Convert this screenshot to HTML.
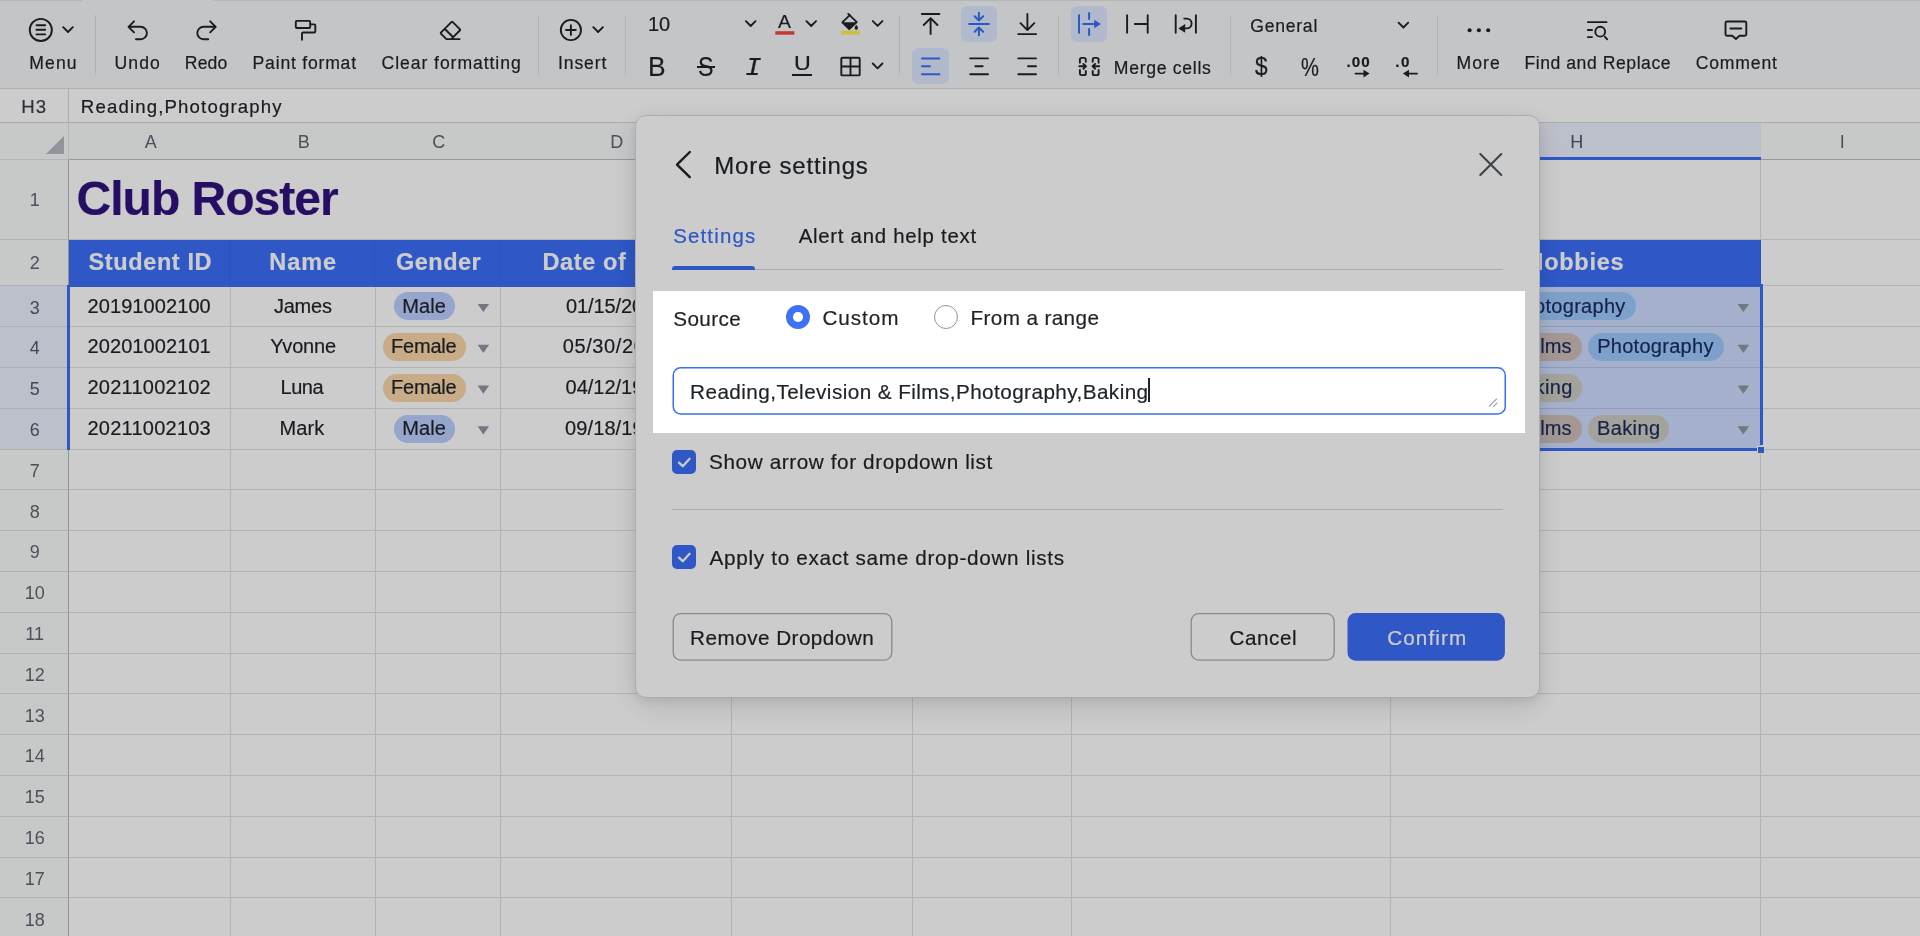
<!DOCTYPE html>
<html lang="en"><head><meta charset="utf-8"><title>Club Roster</title>
<style>
*{box-sizing:border-box}
html,body{margin:0;padding:0}
body{width:1920px;height:936px;overflow:hidden;position:relative;background:#fff;font-family:"Liberation Sans",sans-serif;color:#1f2329}
.a{position:absolute}
.t{position:absolute;white-space:pre;-webkit-text-stroke:.2px currentColor}
.tb{position:absolute;left:0;top:0;width:1920px;height:89px;background:#f6f7f9;border-bottom:1px solid #d9dbdf}
.sep{position:absolute;width:1px;background:#dddfe2;top:15px;height:60px}
.act{position:absolute;background:#dee9ff;border-radius:6px}
.fb{position:absolute;left:0;top:89px;width:1920px;height:34px;background:#fff;border-bottom:1px solid #d4d6da}
.grid{position:absolute;left:0;top:0;width:1920px;height:936px;overflow:hidden}
.ch{position:absolute;top:123px;height:37px;background:#f9fafb;border-right:1px solid #dcdee1;border-bottom:1px solid #bcbfc6}
.rh{position:absolute;left:0;width:69px;background:#f9fafb;border-right:1px solid #b4b7be;border-bottom:1px solid #dcdee1}
.vl{position:absolute;width:1px;background:#dfe0e2}
.hl{position:absolute;height:1px;background:#dfe0e2;left:69px;width:1851px}
.hd{position:absolute;top:240px;height:47px;background:#3b6ef8;border-right:1px solid #3867ea}
.pill{position:absolute;border-radius:15px}
.dd{position:absolute;width:0;height:0;border-left:5.75px solid transparent;border-right:5.75px solid transparent;border-top:8.2px solid #9095a0}
.modal{position:absolute;left:635px;top:115px;width:905px;height:583px;background:#fff;border-radius:11px;border:1px solid #d6d9de;box-shadow:0 8px 28px rgba(31,35,41,.13),0 3px 10px rgba(31,35,41,.08)}
.btn{position:absolute;top:613px;height:48px;border-radius:8px;border:1px solid #b4b8bf}
.cb{position:absolute;left:672px;width:24px;height:24px;border-radius:5px;background:#3b6ef8}
svg{position:absolute;left:0;top:0;overflow:visible}
</style></head><body><div id="app" style="position:absolute;left:0;top:0;width:1920px;height:936px;will-change:transform">

<div class="tb">
<div class="a" style="left:0;top:0;width:82px;height:1px;background:#e3e4e7"></div><div class="a" style="left:213px;top:0;width:1707px;height:1px;background:#e3e4e7"></div>
<div class="sep" style="left:95px"></div>
<div class="sep" style="left:538px"></div>
<div class="sep" style="left:625px"></div>
<div class="sep" style="left:899px"></div>
<div class="sep" style="left:1058px"></div>
<div class="sep" style="left:1230px"></div>
<div class="sep" style="left:1437px"></div>
<div class="act" style="left:961px;top:6px;width:36px;height:36px"></div>
<div class="act" style="left:1071px;top:6px;width:36px;height:36px"></div>
<div class="act" style="left:912px;top:48px;width:37px;height:36px"></div>
<svg width="1920" height="89" viewBox="0 0 1920 89">
<g fill="none" stroke="#1f2329" stroke-width="1.9" stroke-linecap="round" stroke-linejoin="round">
<circle cx="40.8" cy="29.9" r="11.05"/><circle cx="570.9" cy="30" r="10.1"/><circle cx="1600.2" cy="31.7" r="4.9"/>
<path d="M36.5 25.2H45.2M36.5 29.8H45.2M36.5 34.4H45.2M63.2 27.2 L68 32 L72.8 27.2M134 21.3L128.5 26.8L134 32.3M129 26.8H140.7a6.2 6.2 0 0 1 0 12.4H136M210.2 21.3L215.7 26.8L210.2 32.3M215.2 26.8H203.5a6.2 6.2 0 0 0 0 12.4H208.2M296.8 20.9H309.2a1 1 0 0 1 1 1V27a1 1 0 0 1-1 1H296.8a1 1 0 0 1-1-1V21.9a1 1 0 0 1 1-1zM310.4 24.4H314.3a1 1 0 0 1 1 1V31.5a1 1 0 0 1-1 1H303a1 1 0 0 0-1 1V39.8M446.4 39.1L441.1 33.8a1 1 0 0 1 0-1.4L451.4 22.1a1 1 0 0 1 1.4 0L459.8 29.1a1 1 0 0 1 0 1.4L451.2 39.1M444.9 29L452.9 37M446.4 39.1H459.6M566 30H575.8M570.9 25.1V34.9M593.3 27.2 L598.1 32 L602.9 27.2M745.9 21.2 L750.7 26 L755.5 21.2M806.4 21.2 L811.2 26 L816 21.2M872.8 21.1 L877.6 25.9 L882.4 21.1M872.8 63.5 L877.6 68.3 L882.4 63.5M1398.6 22.7 L1403.4 27.5 L1408.2 22.7M921.8 14H939.4M930.6 34V18.3M923.8 25L930.6 18.2L937.4 25M1018.2 34.1H1036.2M1027.4 14V30M1020.5 23.2L1027.4 30.1L1034.3 23.2M1127.1 15.2V32.8M1147.7 15.2V32.8M1134.8 24H1147.7M1175.7 15.2V32.8M1195.9 15.2V32.8M1184.2 18.6H1186.7a4.9 4.9 0 0 1 0 9.8H1185M842.3 57.7H858.7a1 1 0 0 1 1 1V74.4a1 1 0 0 1-1 1H842.3a1 1 0 0 1-1-1V58.7a1 1 0 0 1 1-1zM850.5 57.7V75.4M841.3 66.5H859.7M970.2 58.4H988M975.3 66.3H982.7M970.2 74.3H988M1018.3 58.4H1036M1028 66.3H1036M1018.3 74.3H1036M1079.9 62.8V59.6a1.7 1.7 0 0 1 1.7-1.7h2.5a1.7 1.7 0 0 1 1.7 1.7V61.8M1079.9 69.9V73.4a1.7 1.7 0 0 0 1.7 1.7h2.5a1.7 1.7 0 0 0 1.7-1.7V70.9M1092.7 61.8V59.6a1.7 1.7 0 0 1 1.7-1.7h2.5a1.7 1.7 0 0 1 1.7 1.7V62.8M1092.7 70.9V73.4a1.7 1.7 0 0 0 1.7 1.7h2.5a1.7 1.7 0 0 0 1.7-1.7V69.9M1079.3 66.3H1085.8M1083.4 63.9L1085.9 66.3L1083.4 68.7M1099.2 66.3H1092.7M1095.1 63.9L1092.6 66.3L1095.1 68.7M1355.5 73.6H1364M1417 73.6H1408.5M1587.8 22.1H1606.6M1587.8 30H1592M1587.8 37.1H1592M1605 36.8L1607.2 39.3M1727 21.5H1744.8a1.5 1.5 0 0 1 1.5 1.5V34.2a1.5 1.5 0 0 1-1.5 1.5H1739.5L1735.9 39L1732.3 35.7H1727a1.5 1.5 0 0 1-1.5-1.5V23a1.5 1.5 0 0 1 1.5-1.5zM1730.4 28.5H1741.4"/></g>
<g fill="none" stroke="#3b6ef8" stroke-width="2" stroke-linecap="round" stroke-linejoin="round"><path d="M969.2 24H988.8M978.9 12.8V20M974.7 16.3L978.9 20.5L983.1 16.3M978.9 35.2V28M974.7 31.7L978.9 27.5L983.1 31.7M1079 15.2V32.8M1089.1 13V19M1089.1 29V35M1083.3 24H1094M922 58.4H939.4M922 66.3H930M922 74.3H939.4"/></g>
<g fill="#1f2329" stroke="none">
<path d="M1094.2 19.8L1100.9 24L1094.2 28.2Z" fill="#3b6ef8"/>
<path d="M1178.3 28.4L1185.2 24V32.8Z"/>
<path d="M1363.5 69.8L1369.6 73.6L1363.5 77.4Z"/><path d="M1409 69.8L1402.9 73.6L1409 77.4Z"/>
<circle cx="1469.6" cy="30.2" r="2.05"/><circle cx="1478.9" cy="30.2" r="2.05"/><circle cx="1488.2" cy="30.2" r="2.05"/>
<path d="M842.6 22.3H856.3L849.2 29.2Z"/>
<path d="M856.3 24.7q2.3 2.6 1.6 4.1a1.8 1.8 0 0 1-3.2 0q-.700-1.5 1.6-4.1z"/>
</g>
<path d="M848.2 13.8L856.8 22.2L849.2 29.2L842.3 22.3L850 14.9" fill="none" stroke="#1f2329" stroke-width="1.8" stroke-linejoin="round" stroke-linecap="round"/>
<rect x="775.3" y="31.2" width="19" height="3.5" fill="#f0483f"/><rect x="841.3" y="30.6" width="18.4" height="3.9" fill="#fcf04e"/>
</svg>
<div class="t" style="left:29.3px;top:52.3px;font-size:17.6px;line-height:22px;letter-spacing:1.092px">Menu</div>
<div class="t" style="left:114.5px;top:52.3px;font-size:17.6px;line-height:22px;letter-spacing:1.075px">Undo</div>
<div class="t" style="left:184.8px;top:52.3px;font-size:17.6px;line-height:22px;letter-spacing:0.142px">Redo</div>
<div class="t" style="left:252.6px;top:52.3px;font-size:17.6px;line-height:22px;letter-spacing:0.785px">Paint format</div>
<div class="t" style="left:381.6px;top:52.3px;font-size:17.6px;line-height:22px;letter-spacing:0.928px">Clear formatting</div>
<div class="t" style="left:557.9px;top:52.3px;font-size:17.6px;line-height:22px;letter-spacing:0.917px">Insert</div>
<div class="t" style="left:1456.4px;top:52.3px;font-size:17.6px;line-height:22px;letter-spacing:1.134px">More</div>
<div class="t" style="left:1524.4px;top:52.3px;font-size:17.6px;line-height:22px;letter-spacing:0.552px">Find and Replace</div>
<div class="t" style="left:1695.7px;top:52.3px;font-size:17.6px;line-height:22px;letter-spacing:0.838px">Comment</div>
<div class="t" style="left:648px;top:12.2px;font-size:20px;line-height:24px;letter-spacing:-0.123px">10</div>
<div class="t" style="left:778.4px;top:10.1px;font-size:19px;line-height:23px;transform:scaleX(1.023);transform-origin:0 0">A</div>
<div class="t" style="left:1250.2px;top:14.5px;font-size:17.6px;line-height:22px;letter-spacing:0.753px">General</div>
<div class="t" style="left:1113.8px;top:57px;font-size:17.6px;line-height:22px;letter-spacing:0.704px">Merge cells</div>
<div class="t" style="left:648.07px;top:49.7px;font-size:27.3px;line-height:33px;transform:scaleX(0.967);transform-origin:0 0">B</div>
<div class="t" style="left:698.15px;top:49.5px;font-size:27.3px;line-height:33px;transform:scaleX(0.85);transform-origin:0 0">S</div>
<div class="a" style="left:697px;top:66px;width:17.5px;height:1.9px;background:#1f2329"></div>
<div class="t" style="left:744.85px;top:52.2px;font-size:26.2px;line-height:32px;font-family:'Liberation Mono',monospace;font-style:italic;transform:scaleX(1.053);transform-origin:0 0">I</div>
<div class="t" style="left:793.7px;top:51.3px;font-size:19.4px;line-height:24px;transform:scaleX(1.2);transform-origin:0 0">U</div>
<div class="a" style="left:792px;top:73.8px;width:20.1px;height:1.9px;background:#1f2329"></div>
<div class="t" style="left:1255px;top:50.6px;font-size:25px;line-height:30px;transform:scaleX(0.907);transform-origin:0 0">$</div>
<div class="t" style="left:1301px;top:50.6px;font-size:26px;line-height:32px;transform:scaleX(0.774);transform-origin:0 0">%</div>
<div class="t" style="left:1346.6px;top:51.7px;font-size:15.2px;line-height:19px;letter-spacing:0.967px;font-weight:700">.00</div>
<div class="t" style="left:1395.3px;top:51.7px;font-size:15.2px;line-height:19px;letter-spacing:1.38px;font-weight:700">.0</div>
</div>
<div class="fb"><div class="a" style="left:68px;top:0;width:1px;height:33px;background:#d4d6da"></div></div>
<div class="t" style="left:21.3px;top:94.7px;font-size:18.6px;line-height:23px;letter-spacing:1.072px;color:#3a3f47">H3</div>
<div class="t" style="left:80.8px;top:94.7px;font-size:18.6px;line-height:23px;letter-spacing:1.162px">Reading,Photography</div>
<div class="grid">
<div class="vl" style="left:230px;top:160px;height:800px"></div>
<div class="vl" style="left:375px;top:160px;height:800px"></div>
<div class="vl" style="left:500px;top:160px;height:800px"></div>
<div class="vl" style="left:731px;top:160px;height:800px"></div>
<div class="vl" style="left:912px;top:160px;height:800px"></div>
<div class="vl" style="left:1071px;top:160px;height:800px"></div>
<div class="vl" style="left:1390px;top:160px;height:800px"></div>
<div class="vl" style="left:1760px;top:160px;height:800px"></div>
<div class="hl" style="top:239px"></div>
<div class="hl" style="top:285px"></div>
<div class="hl" style="top:326px"></div>
<div class="hl" style="top:367px"></div>
<div class="hl" style="top:408px"></div>
<div class="hl" style="top:449px"></div>
<div class="hl" style="top:489px"></div>
<div class="hl" style="top:530px"></div>
<div class="hl" style="top:571px"></div>
<div class="hl" style="top:612px"></div>
<div class="hl" style="top:653px"></div>
<div class="hl" style="top:693px"></div>
<div class="hl" style="top:734px"></div>
<div class="hl" style="top:775px"></div>
<div class="hl" style="top:816px"></div>
<div class="hl" style="top:857px"></div>
<div class="hl" style="top:897px"></div>
<div class="hl" style="top:938px"></div>
<div class="ch" style="left:0;width:69px;border-right-color:#e2e3e8;border-bottom-color:#e2e3e8"></div>
<div class="a" style="left:45.5px;top:136px;width:0;height:0;border-left:18px solid transparent;border-bottom:18px solid #b5b9c2"></div>
<div class="ch" style="left:69px;width:162px"></div>
<div class="t" style="left:144.8px;top:131.3px;font-size:18px;line-height:22px;color:#5f6571;-webkit-text-stroke:0">A</div>
<div class="ch" style="left:230px;width:146px"></div>
<div class="t" style="left:297.8px;top:131.3px;font-size:18px;line-height:22px;color:#5f6571;-webkit-text-stroke:0">B</div>
<div class="ch" style="left:375px;width:126px"></div>
<div class="t" style="left:432.3px;top:131.3px;font-size:18px;line-height:22px;color:#5f6571;-webkit-text-stroke:0">C</div>
<div class="ch" style="left:500px;width:232px"></div>
<div class="t" style="left:610.3px;top:131.3px;font-size:18px;line-height:22px;color:#5f6571;-webkit-text-stroke:0">D</div>
<div class="ch" style="left:731px;width:182px"></div>
<div class="t" style="left:816.8px;top:131.3px;font-size:18px;line-height:22px;color:#5f6571;-webkit-text-stroke:0">E</div>
<div class="ch" style="left:912px;width:160px"></div>
<div class="t" style="left:987.3px;top:131.3px;font-size:18px;line-height:22px;color:#5f6571;-webkit-text-stroke:0">F</div>
<div class="ch" style="left:1071px;width:320px"></div>
<div class="t" style="left:1224.8px;top:131.3px;font-size:18px;line-height:22px;color:#5f6571;-webkit-text-stroke:0">G</div>
<div class="ch" style="left:1390px;width:372px;background:#ecf0fe;border-bottom:3px solid #3b6ef8"></div>
<div class="t" style="left:1570.3px;top:131.3px;font-size:18px;line-height:22px;color:#4d5565;-webkit-text-stroke:0">H</div>
<div class="ch" style="left:1761px;width:161px"></div>
<div class="t" style="left:1839.8px;top:131.3px;font-size:18px;line-height:22px;color:#5f6571;-webkit-text-stroke:0">I</div>
<div class="rh" style="top:160px;height:80px"></div>
<div class="t" style="left:29.69px;top:189.2px;font-size:18px;line-height:22px;color:#5f6571;-webkit-text-stroke:0">1</div>
<div class="rh" style="top:240px;height:46px"></div>
<div class="t" style="left:29.69px;top:252.2px;font-size:18px;line-height:22px;color:#5f6571;-webkit-text-stroke:0">2</div>
<div class="rh" style="top:286px;height:41px;background:#ecf0fe"></div>
<div class="t" style="left:29.69px;top:296.6px;font-size:18px;line-height:22px;color:#525a6b;-webkit-text-stroke:0">3</div>
<div class="rh" style="top:327px;height:41px;background:#ecf0fe"></div>
<div class="t" style="left:29.69px;top:337.4px;font-size:18px;line-height:22px;color:#525a6b;-webkit-text-stroke:0">4</div>
<div class="rh" style="top:368px;height:41px;background:#ecf0fe"></div>
<div class="t" style="left:29.69px;top:378.2px;font-size:18px;line-height:22px;color:#525a6b;-webkit-text-stroke:0">5</div>
<div class="rh" style="top:409px;height:41px;background:#ecf0fe"></div>
<div class="t" style="left:29.69px;top:419px;font-size:18px;line-height:22px;color:#525a6b;-webkit-text-stroke:0">6</div>
<div class="rh" style="top:450px;height:40px"></div>
<div class="t" style="left:29.69px;top:459.8px;font-size:18px;line-height:22px;color:#5f6571;-webkit-text-stroke:0">7</div>
<div class="rh" style="top:490px;height:41px"></div>
<div class="t" style="left:29.69px;top:500.6px;font-size:18px;line-height:22px;color:#5f6571;-webkit-text-stroke:0">8</div>
<div class="rh" style="top:531px;height:41px"></div>
<div class="t" style="left:29.69px;top:541.4px;font-size:18px;line-height:22px;color:#5f6571;-webkit-text-stroke:0">9</div>
<div class="rh" style="top:572px;height:41px"></div>
<div class="t" style="left:24.69px;top:582.2px;font-size:18px;line-height:22px;color:#5f6571;-webkit-text-stroke:0">10</div>
<div class="rh" style="top:613px;height:41px"></div>
<div class="t" style="left:25.36px;top:623px;font-size:18px;line-height:22px;color:#5f6571;-webkit-text-stroke:0">11</div>
<div class="rh" style="top:654px;height:40px"></div>
<div class="t" style="left:24.69px;top:663.8px;font-size:18px;line-height:22px;color:#5f6571;-webkit-text-stroke:0">12</div>
<div class="rh" style="top:694px;height:41px"></div>
<div class="t" style="left:24.69px;top:704.6px;font-size:18px;line-height:22px;color:#5f6571;-webkit-text-stroke:0">13</div>
<div class="rh" style="top:735px;height:41px"></div>
<div class="t" style="left:24.69px;top:745.4px;font-size:18px;line-height:22px;color:#5f6571;-webkit-text-stroke:0">14</div>
<div class="rh" style="top:776px;height:41px"></div>
<div class="t" style="left:24.69px;top:786.2px;font-size:18px;line-height:22px;color:#5f6571;-webkit-text-stroke:0">15</div>
<div class="rh" style="top:817px;height:41px"></div>
<div class="t" style="left:24.69px;top:827px;font-size:18px;line-height:22px;color:#5f6571;-webkit-text-stroke:0">16</div>
<div class="rh" style="top:858px;height:40px"></div>
<div class="t" style="left:24.69px;top:867.8px;font-size:18px;line-height:22px;color:#5f6571;-webkit-text-stroke:0">17</div>
<div class="rh" style="top:898px;height:41px"></div>
<div class="t" style="left:24.69px;top:908.6px;font-size:18px;line-height:22px;color:#5f6571;-webkit-text-stroke:0">18</div>
<div class="a" style="left:70px;top:160px;width:1690px;height:79px;background:#fff"></div>
<div class="t" style="left:76.6px;top:169.9px;font-size:48px;line-height:58px;letter-spacing:-0.994px;font-weight:700;color:#31127f">Club Roster</div>
<div class="hd" style="left:69px;width:161px"></div>
<div class="hd" style="left:230px;width:145px"></div>
<div class="hd" style="left:375px;width:125px"></div>
<div class="hd" style="left:500px;width:231px"></div>
<div class="hd" style="left:731px;width:181px"></div>
<div class="hd" style="left:912px;width:159px"></div>
<div class="hd" style="left:1071px;width:319px"></div>
<div class="hd" style="left:1390px;width:371px"></div>
<div class="t" style="left:88.5px;top:248.2px;font-size:23.5px;line-height:29px;letter-spacing:0.62px;font-weight:700;color:#fff">Student ID</div>
<div class="t" style="left:269.3px;top:248.2px;font-size:23.5px;line-height:29px;letter-spacing:0.921px;font-weight:700;color:#fff">Name</div>
<div class="t" style="left:396px;top:248.2px;font-size:23.5px;line-height:29px;letter-spacing:0.474px;font-weight:700;color:#fff">Gender</div>
<div class="t" style="left:542.5px;top:248.2px;font-size:23.5px;line-height:29px;letter-spacing:0.613px;font-weight:700;color:#fff">Date of Birth</div>
<div class="t" style="left:785px;top:248.2px;font-size:23.5px;line-height:29px;letter-spacing:0.3px;font-weight:700;color:#fff">Phone</div>
<div class="t" style="left:956.94px;top:248.2px;font-size:23.5px;line-height:29px;letter-spacing:0.3px;font-weight:700;color:#fff">Grade</div>
<div class="t" style="left:1198.55px;top:248.2px;font-size:23.5px;line-height:29px;letter-spacing:0.3px;font-weight:700;color:#fff">Email</div>
<div class="t" style="left:1526.6px;top:248.2px;font-size:23.5px;line-height:29px;letter-spacing:0.694px;font-weight:700;color:#fff">Hobbies</div>
<div class="t" style="left:87.5px;top:293.5px;font-size:20px;line-height:24px;letter-spacing:0.087px">20191002100</div>
<div class="t" style="left:273.9px;top:293.5px;font-size:20px;line-height:24px;letter-spacing:-0.202px">James</div>
<div class="pill" style="left:393.7px;width:61.3px;top:292.2px;height:28.3px;background:#bccffe"></div>
<div class="t" style="left:402.3px;top:293.5px;font-size:20px;line-height:24px;letter-spacing:0.058px">Male</div>
<div class="t" style="left:565.9px;top:293.5px;font-size:20px;line-height:24px;letter-spacing:-0.086px">01/15/2001</div>
<div class="t" style="left:87.5px;top:334.3px;font-size:20px;line-height:24px;letter-spacing:0.087px">20201002101</div>
<div class="t" style="left:270.3px;top:334.3px;font-size:20px;line-height:24px;letter-spacing:-0.181px">Yvonne</div>
<div class="pill" style="left:382.8px;width:83.3px;top:333px;height:28.3px;background:#fad7a9"></div>
<div class="t" style="left:391px;top:334.3px;font-size:20px;line-height:24px;letter-spacing:-0.193px">Female</div>
<div class="t" style="left:562.7px;top:334.3px;font-size:20px;line-height:24px;letter-spacing:0.625px">05/30/2002</div>
<div class="t" style="left:87.5px;top:375.1px;font-size:20px;line-height:24px;letter-spacing:0.235px">20211002102</div>
<div class="t" style="left:280.5px;top:375.1px;font-size:20px;line-height:24px;letter-spacing:-0.49px">Luna</div>
<div class="pill" style="left:382.8px;width:83.3px;top:373.8px;height:28.3px;background:#fad7a9"></div>
<div class="t" style="left:391px;top:375.1px;font-size:20px;line-height:24px;letter-spacing:-0.193px">Female</div>
<div class="t" style="left:565.6px;top:375.1px;font-size:20px;line-height:24px;letter-spacing:-0.019px">04/12/1999</div>
<div class="t" style="left:87.5px;top:415.9px;font-size:20px;line-height:24px;letter-spacing:0.235px">20211002103</div>
<div class="t" style="left:279.6px;top:415.9px;font-size:20px;line-height:24px;letter-spacing:0.052px">Mark</div>
<div class="pill" style="left:393.7px;width:61.3px;top:414.6px;height:28.3px;background:#bccffe"></div>
<div class="t" style="left:402.3px;top:415.9px;font-size:20px;line-height:24px;letter-spacing:0.058px">Male</div>
<div class="t" style="left:565.1px;top:415.9px;font-size:20px;line-height:24px;letter-spacing:0.092px">09/18/1998</div>
<div class="a" style="left:1391px;top:287px;width:369px;height:162px;background:rgba(51,112,255,.235)"></div>
<div class="pill" style="left:1401px;width:91px;top:292.2px;height:28.3px;background:#a9bdf2"></div>
<div class="t" style="left:1410px;top:293.5px;font-size:20px;line-height:24px;letter-spacing:-0.23px;color:#1a2c5e">Reading</div>
<div class="pill" style="left:1500px;width:135.7px;top:292.2px;height:28.3px;background:#9dcafe"></div>
<div class="t" style="left:1509.1px;top:293.5px;font-size:20px;line-height:24px;letter-spacing:0.278px;color:#1a2c5e">Photography</div>
<div class="pill" style="left:1401px;width:180.7px;top:333px;height:28.3px;background:#cfbfba"></div>
<div class="t" style="left:1411px;top:334.3px;font-size:20px;line-height:24px;letter-spacing:0.027px;color:#1a2c5e">Television &amp; Films</div>
<div class="pill" style="left:1588.1px;width:135.7px;top:333px;height:28.3px;background:#9dcafe"></div>
<div class="t" style="left:1597.2px;top:334.3px;font-size:20px;line-height:24px;letter-spacing:0.278px;color:#1a2c5e">Photography</div>
<div class="pill" style="left:1500px;width:81.5px;top:373.8px;height:28.3px;background:#ccccc2"></div>
<div class="t" style="left:1509.2px;top:375.1px;font-size:20px;line-height:24px;letter-spacing:0.414px;color:#1a2c5e">Baking</div>
<div class="pill" style="left:1401px;width:180.7px;top:414.6px;height:28.3px;background:#cfbfba"></div>
<div class="t" style="left:1411px;top:415.9px;font-size:20px;line-height:24px;letter-spacing:0.027px;color:#1a2c5e">Television &amp; Films</div>
<div class="pill" style="left:1587.7px;width:81.5px;top:414.6px;height:28.3px;background:#ccccc2"></div>
<div class="t" style="left:1596.9px;top:415.9px;font-size:20px;line-height:24px;letter-spacing:0.414px;color:#1a2c5e">Baking</div>
<svg width="1920" height="936" viewBox="0 0 1920 936"><path fill="#9095a0" d="M477.6 303.9h11.5l-5.75 8.2zM477.6 344.7h11.5l-5.75 8.2zM477.6 385.5h11.5l-5.75 8.2zM477.6 426.3h11.5l-5.75 8.2zM1737.6 303.9h11.5l-5.75 8.2zM1737.6 344.7h11.5l-5.75 8.2zM1737.6 385.5h11.5l-5.75 8.2zM1737.6 426.3h11.5l-5.75 8.2z"/></svg>
<div class="a" style="left:67px;top:285px;width:3px;height:165px;background:#3b6ef8"></div>
<div class="a" style="left:1760px;top:284px;width:3px;height:161px;background:#3b6ef8"></div>
<div class="a" style="left:1390px;top:448px;width:367px;height:3px;background:#3b6ef8"></div>
<div class="a" style="left:1757px;top:446px;width:8px;height:8px;background:#3b6ef8;border:1px solid #fff"></div>
</div>
<div class="modal"></div>
<svg width="1920" height="936" viewBox="0 0 1920 936">
<path d="M689.8 152L677 164.6L689.8 177.2" fill="none" stroke="#1f2329" stroke-width="2.4" stroke-linecap="round" stroke-linejoin="round"/>
<path d="M1480.3 154L1501.3 175M1501.3 154L1480.3 175" fill="none" stroke="#50555e" stroke-width="2.1" stroke-linecap="round"/>
</svg>
<div class="t" style="left:714.3px;top:150.6px;font-size:24px;line-height:29px;letter-spacing:0.787px">More settings</div>
<div class="t" style="left:673.2px;top:223.9px;font-size:20.4px;line-height:25px;letter-spacing:1.188px;color:#3b6ef8">Settings</div>
<div class="t" style="left:798.7px;top:223.9px;font-size:20.4px;line-height:25px;letter-spacing:0.723px">Alert and help text</div>
<div class="a" style="left:672px;top:269px;width:831px;height:1px;background:#d3d5d9"></div>
<div class="a" style="left:672px;top:266px;width:83px;height:4px;background:#3b6ef8;border-radius:3px 3px 0 0"></div>
<div class="t" style="left:673.2px;top:305.9px;font-size:20.7px;line-height:25px;letter-spacing:0.412px">Source</div>
<div class="a" style="left:786px;top:305px;width:24px;height:24px;border-radius:50%;background:#3e71f5"></div>
<div class="a" style="left:793.2px;top:312.2px;width:9.6px;height:9.6px;border-radius:50%;background:#fff"></div>
<div class="t" style="left:822.4px;top:304.7px;font-size:20.7px;line-height:25px;letter-spacing:0.952px">Custom</div>
<div class="a" style="left:934px;top:305px;width:24px;height:24px;border-radius:50%;border:1.5px solid #8f959e;background:#fff"></div>
<div class="t" style="left:970.5px;top:304.7px;font-size:20.7px;line-height:25px;letter-spacing:0.385px">From a range</div>
<svg width="1920" height="936" viewBox="0 0 1920 936"><rect x="673.25" y="367.85" width="832" height="46.1" rx="7.3" fill="#fff" stroke="#3b6ef8" stroke-width="1.5"/></svg>
<div class="t" style="left:690.1px;top:379px;font-size:20.7px;line-height:25px;letter-spacing:0.435px">Reading,Television &amp; Films,Photography,Baking</div>
<svg width="1920" height="936" viewBox="0 0 1920 936"><path d="M1489.3 406.2L1496.6 398.9M1493.6 406.4L1496.8 403.2" fill="none" stroke="#9499a1" stroke-width="1.1" stroke-linecap="round"/></svg>
<div class="a" style="left:1148.3px;top:377.6px;width:1.7px;height:24.6px;background:#1f2329"></div>
<div class="cb" style="top:450px"><svg style="left:0;top:0" width="24" height="24" viewBox="0 0 24 24"><path d="M7 12.6L10.8 16.2L17.6 8.8" stroke="#fff" stroke-width="2.3" fill="none" stroke-linecap="round" stroke-linejoin="round"/></svg></div>
<div class="t" style="left:709.1px;top:449.2px;font-size:20.7px;line-height:25px;letter-spacing:0.607px">Show arrow for dropdown list</div>
<div class="a" style="left:672px;top:509px;width:831px;height:1px;background:#d3d5d9"></div>
<div class="cb" style="top:545px"><svg style="left:0;top:0" width="24" height="24" viewBox="0 0 24 24"><path d="M7 12.6L10.8 16.2L17.6 8.8" stroke="#fff" stroke-width="2.3" fill="none" stroke-linecap="round" stroke-linejoin="round"/></svg></div>
<div class="t" style="left:709.6px;top:544.6px;font-size:20.7px;line-height:25px;letter-spacing:0.685px">Apply to exact same drop-down lists</div>
<svg width="1920" height="936" viewBox="0 0 1920 936"><g fill="none" stroke="#a9afb9" stroke-width="1.36"><rect x="673.18" y="613.68" width="218.6" height="46.4" rx="7.5"/><rect x="1191.18" y="613.68" width="143" height="46.4" rx="7.5"/></g><rect x="1347.5" y="613.1" width="157.4" height="47.6" rx="8" fill="#3b6ef8"/></svg>
<div class="t" style="left:690.1px;top:625.1px;font-size:20.7px;line-height:25px;letter-spacing:0.466px">Remove Dropdown</div>
<div class="t" style="left:1229.6px;top:625.1px;font-size:20.7px;line-height:25px;letter-spacing:0.52px">Cancel</div>
<div class="t" style="left:1387.2px;top:625.1px;font-size:20.7px;line-height:25px;letter-spacing:1.086px;color:#fff">Confirm</div>
<div class="a" style="left:653px;top:291px;width:872px;height:142px;box-shadow:0 0 0 3000px rgba(0,0,0,.2);pointer-events:none"></div>
</div></body></html>
